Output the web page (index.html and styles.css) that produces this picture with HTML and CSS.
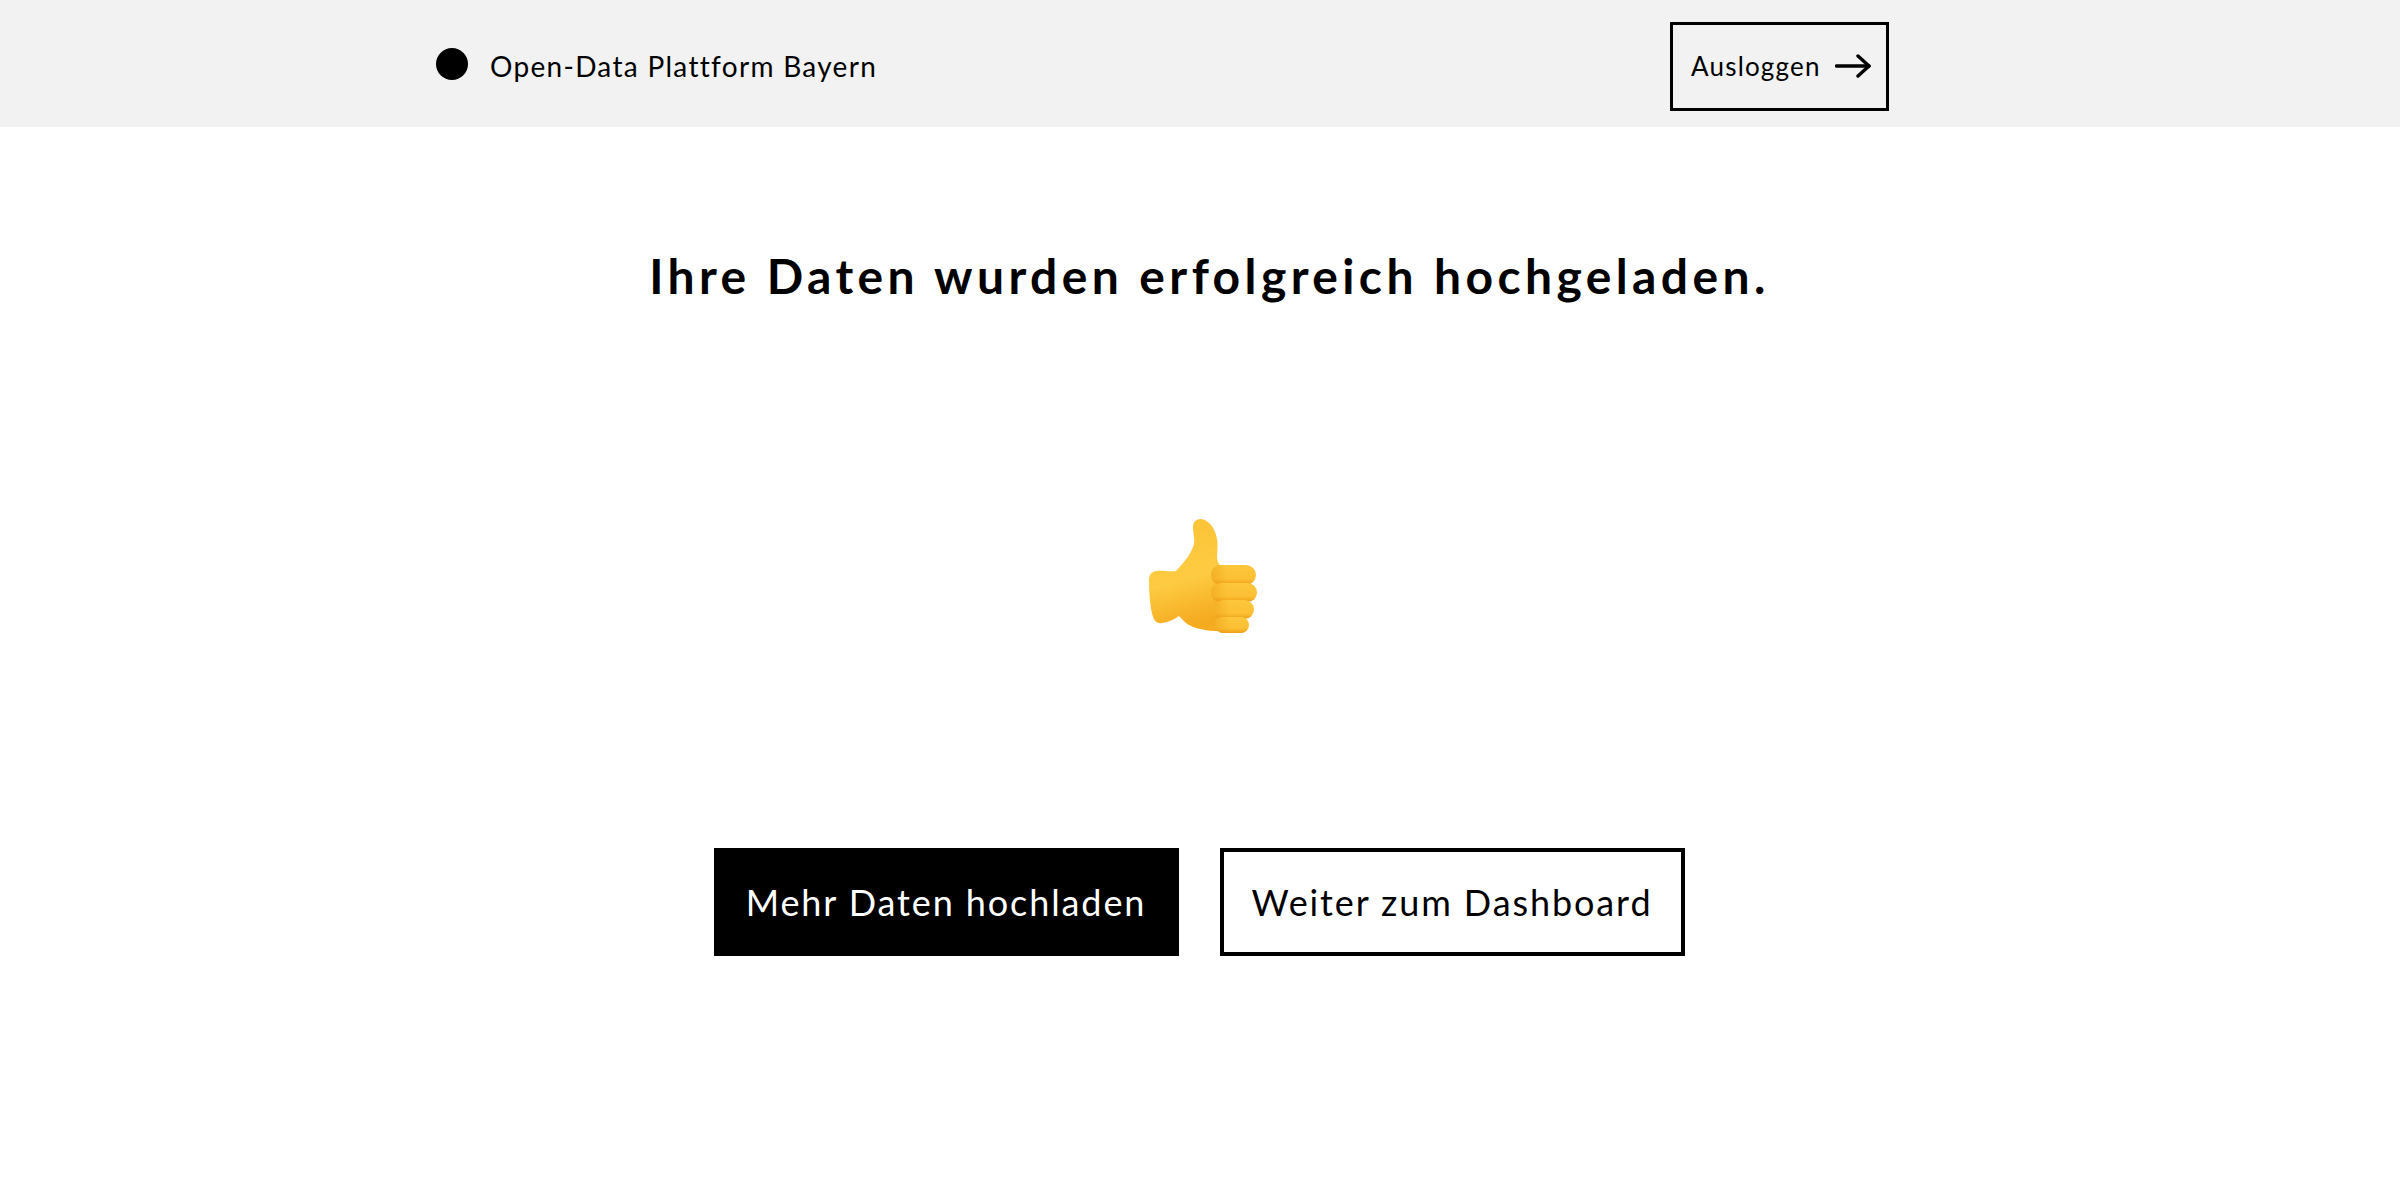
FILE: index.html
```html
<!DOCTYPE html>
<html lang="de">
<head>
    <meta charset="UTF-8">
    <title>Open-Data Plattform Bayern</title>
    <link rel="stylesheet" href="styles.css">
</head>
<body>
    <header class="topbar">
        <div class="brand">
            <span class="brand-dot"></span>
            <span class="brand-name">Open-Data Plattform Bayern</span>
        </div>
        <a class="logout" href="#">
            <span class="logout-label">Ausloggen</span>
            <svg class="logout-arrow" width="36" height="24" viewBox="0 0 36 24" fill="none" stroke="#000" stroke-width="3.4" stroke-linecap="round" stroke-linejoin="round">
                <path d="M1.5 12H34"/>
                <path d="M23 2l11 10-11 10"/>
            </svg>
        </a>
    </header>

    <main class="content">
        <h1 class="headline">Ihre Daten wurden erfolgreich hochgeladen.</h1>

        <svg class="thumb" width="112" height="116" viewBox="0 0 112 116" role="img" aria-label="Daumen hoch">
            <defs>
                <linearGradient id="hand" x1="0" y1="0" x2="0.2" y2="1">
                    <stop offset="0" stop-color="#fcc234"/>
                    <stop offset="0.6" stop-color="#fdcb42"/>
                    <stop offset="1" stop-color="#f5ab20"/>
                </linearGradient>
                <linearGradient id="finger" x1="0" y1="0" x2="0" y2="1">
                    <stop offset="0" stop-color="#fdc63c"/>
                    <stop offset="0.7" stop-color="#fcc034"/>
                    <stop offset="1" stop-color="#ef9f16"/>
                </linearGradient>
                <linearGradient id="knuckle" x1="0" y1="0" x2="1" y2="0">
                    <stop offset="0" stop-color="#e99a12" stop-opacity="0.45"/>
                    <stop offset="1" stop-color="#e99a12" stop-opacity="0"/>
                </linearGradient>
            </defs>
            <path fill="url(#hand)" d="M9 52C4 53 2 56 2 61C2 74 3 88 6 98C8 103 11 105 15 104C22 103 28 100 32 97C36 101 38 104 42 106C50 110 60 112 72 112L80 60L73 46C71 44 70 42 70 36C71 28 71 20 68 13C65 5 60 1 54 0C49 0 46 3 46 8C46 14 48 20 47 25C45 33 38 43 29 52C22 53 15 51 9 52Z"/>
            <rect fill="url(#finger)" x="64" y="46" width="45" height="20" rx="10"/>
            <rect fill="url(#knuckle)" x="64" y="46" width="16" height="20" rx="10"/>
            <rect fill="url(#finger)" x="64" y="64" width="46" height="19" rx="9.5"/>
            <rect fill="url(#knuckle)" x="64" y="64" width="16" height="19" rx="9.5"/>
            <rect fill="url(#finger)" x="67" y="81" width="40" height="19" rx="9.5"/>
            <rect fill="url(#knuckle)" x="67" y="81" width="16" height="19" rx="9.5"/>
            <rect fill="url(#finger)" x="68" y="98" width="34" height="16" rx="8"/>
            <rect fill="url(#knuckle)" x="68" y="98" width="16" height="16" rx="8"/>
        </svg>

        <div class="actions">
            <a class="btn btn-primary" href="#">Mehr Daten hochladen</a>
            <a class="btn btn-outline" href="#">Weiter zum Dashboard</a>
        </div>
    </main>
</body>
</html>
```

FILE: styles.css
```css
* { box-sizing: border-box; }
body { margin: 0; background-color: #fff; color: #000; font-family: "Lato", "Open Sans", sans-serif; }
a { color: inherit; text-decoration: none; }

.topbar {
    height: 127px;
    padding: 0 511px 0 436px;
    display: flex;
    align-items: center;
    justify-content: space-between;
    background-color: #f2f2f2;
}
.brand { display: flex; align-items: center; gap: 22px; }
.brand-dot { width: 32px; height: 32px; border-radius: 50%; background-color: #000; }
.brand-name { margin-top: 4px; font-size: 28px; letter-spacing: 1.3px; }
.logout {
    width: 219px;
    height: 89px;
    margin-top: 5px;
    padding-left: 18px;
    display: flex;
    align-items: center;
    gap: 14px;
    border: 3px solid #000;
}
.logout-label { font-size: 26px; letter-spacing: 1.2px; }

.content { display: flex; flex-direction: column; align-items: center; }
.headline {
    margin: 120px 0 0 19px;
    font-size: 48px;
    line-height: 58px;
    font-weight: 700;
    letter-spacing: 4.4px;
}
.thumb { margin: 214px 0 0 6px; }
.actions { margin-top: 213px; display: flex; gap: 41px; margin-right: 2px; }
.btn {
    width: 465px;
    height: 108px;
    display: flex;
    align-items: center;
    justify-content: center;
    font-size: 36px;
    letter-spacing: 1.9px;
    border: 4px solid #000;
}
.btn-primary { background-color: #000; color: #fff; }
.btn-outline { background-color: #fff; }
```
